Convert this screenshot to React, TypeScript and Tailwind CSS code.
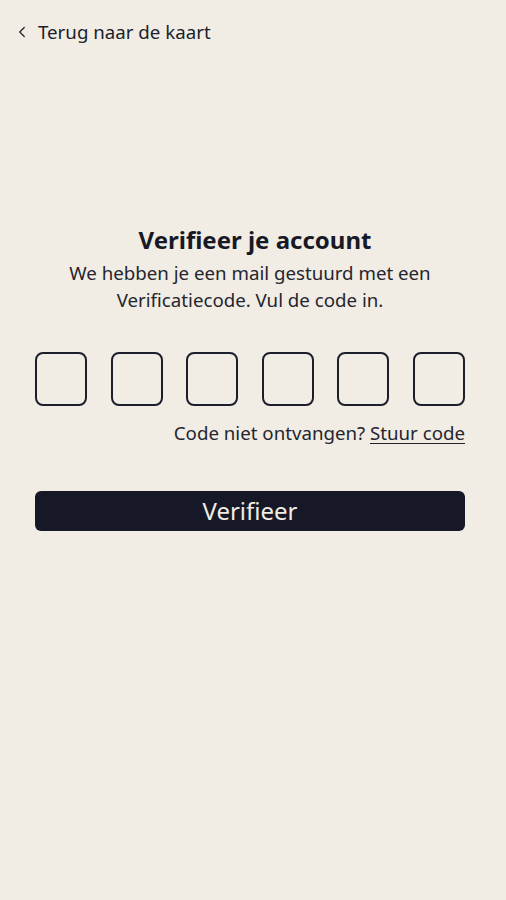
import React from 'react';
import { ChevronLeft } from 'lucide-react';

const font = { fontFamily: '"Noto Sans", "Open Sans", sans-serif' };

const App = () => {
  const digits = [0, 1, 2, 3, 4, 5];

  return (
    <div className="min-h-screen w-full bg-[#f1ece4] text-[#1c1e2c]" style={font}>
      <div className="flex items-center gap-[7px] pt-[18px] pl-[13px]">
        <ChevronLeft className="h-[18px] w-[18px]" strokeWidth={1.6} />
        <span className="text-[18.7px] leading-[27px]">Terug naar de kaart</span>
      </div>

      <div className="ml-[35px] w-[430px] flex flex-col">
        <h1 className="mt-[179px] pl-[10px] text-center text-[24px] leading-[32px] font-bold text-[#171926]">
          Verifieer je account
        </h1>
        <p className="mt-[3px] text-center text-[18.7px] leading-[27px] text-[#24252f]">
          We hebben je een mail gestuurd met een
          <br />
          Verificatiecode. Vul de code in.
        </p>

        <div className="mt-[39px] flex justify-between">
          {digits.map((d) => (
            <input
              key={d}
              type="text"
              maxLength={1}
              className="h-[54px] w-[52px] rounded-[8px] border-2 border-[#1c1e2c] bg-transparent text-center text-[24px] outline-none"
            />
          ))}
        </div>

        <p className="mt-[13px] text-right text-[18.7px] leading-[27px] text-[#24252f]">
          Code niet ontvangen? <span className="underline underline-offset-[3px]">Stuur code</span>
        </p>

        <button className="mt-[45px] h-[40px] w-full rounded-[6px] bg-[#161827] text-[24px] leading-[40px] text-[#f1ece4]">
          Verifieer
        </button>
      </div>
    </div>
  );
};

export default App;
